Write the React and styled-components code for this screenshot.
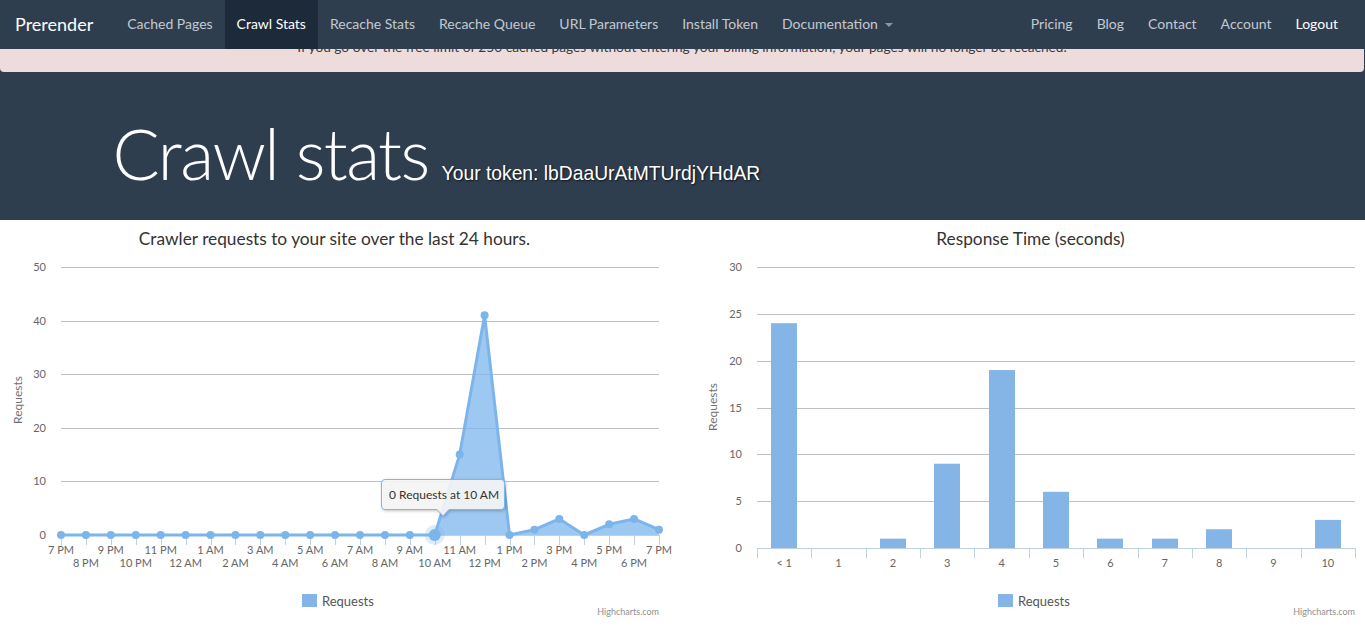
import React from 'react'
import styled, { createGlobalStyle } from 'styled-components'

// page chrome + two highcharts-like charts drawn in svg

const BLUE = '#7cb5ec'

const GlobalStyle = createGlobalStyle`
  body {
    margin: 0;
    background: #fff;
    font-family: Lato, "Helvetica Neue", Arial, sans-serif;
    color: #333;
  }
  * { box-sizing: border-box; }
`

const leftLinks = ['Cached Pages', 'Crawl Stats', 'Recache Stats', 'Recache Queue', 'URL Parameters', 'Install Token']
const rightLinks = ['Pricing', 'Blog', 'Contact', 'Account']

const AREA_DATA = [...Array(16).fill(0), 15, 41, 0, 1, 3, 0, 2, 3, 1]
const BAR_DATA = [24, 0, 1, 9, 19, 6, 1, 1, 2, 0, 3]
const BAR_CATS = ['< 1', '1', '2', '3', '4', '5', '6', '7', '8', '9', '10']

const hourLabel = i => {
  const h = (19 + i) % 24
  return `${h % 12 || 12} ${h < 12 ? 'AM' : 'PM'}`
}

const App = () => {
  return (
    <>
      <GlobalStyle />
      <Navbar>
        <Brand>Prerender</Brand>
        <NavGroup>
          {leftLinks.map(l => (
            <NavItem key={l} $active={l === 'Crawl Stats'}>{l}</NavItem>
          ))}
          <NavItem>Documentation<Caret /></NavItem>
        </NavGroup>
        <NavGroup $right>
          {rightLinks.map(l => <NavItem key={l}>{l}</NavItem>)}
          <NavItem $bright>Logout</NavItem>
        </NavGroup>
      </Navbar>

      <TopBand>
        <Alert>
          If you go over the free limit of 250 cached pages without entering your billing information, your pages will no longer be recached.
        </Alert>
        <Jumbotron>
          <Container>
            <Title>Crawl stats<Token>Your token: lbDaaUrAtMTUrdjYHdAR</Token></Title>
          </Container>
        </Jumbotron>
      </TopBand>

      <ChartsRow>
        <RequestsChart />
        <ResponseChart />
      </ChartsRow>
    </>
  )
}

export default App

const RequestsChart = () => {
  const left = 61
  const width = 598
  const bottom = 315
  const step = width / 24
  const unit = 5.36
  const px = i => left + i * step
  const py = v => bottom - v * unit
  const line = AREA_DATA.map((v, i) => `${px(i)},${py(v)}`).join(' L ')
  const hover = 15

  return (
    <ChartSvg width="669" height="400">
      <ChartTitle x="334.5" y="25" textAnchor="middle">Crawler requests to your site over the last 24 hours.</ChartTitle>
      {[10, 20, 30, 40, 50].map(v => (
        <GridLine key={v} x1={left} x2={left + width} y1={Math.round(py(v)) + 0.5} y2={Math.round(py(v)) + 0.5} />
      ))}
      {[0, 10, 20, 30, 40, 50].map(v => (
        <AxisLabel key={v} x="46" y={py(v) + 4} textAnchor="end">{v}</AxisLabel>
      ))}
      <AxisTitle transform="translate(22 180) rotate(-90)" textAnchor="middle">Requests</AxisTitle>

      <AxisLine x1={left} x2={left + width} y1={bottom + 0.5} y2={bottom + 0.5} />
      {AREA_DATA.map((_, i) => (
        <AxisLine key={i} x1={Math.round(px(i)) + 0.5} x2={Math.round(px(i)) + 0.5} y1={bottom} y2={bottom + 10} />
      ))}
      {AREA_DATA.map((_, i) => (
        <AxisLabel key={i} x={px(i)} y={i % 2 ? 347 : 334} textAnchor="middle">{hourLabel(i)}</AxisLabel>
      ))}

      <AreaFill d={`M ${line} L ${px(24)},${bottom} L ${px(0)},${bottom} Z`} />
      <SeriesLine d={`M ${line}`} />
      <circle cx={px(hover)} cy={bottom} r="10" fill={BLUE} fillOpacity="0.25" />
      {AREA_DATA.map((v, i) => (
        <circle key={i} cx={px(i)} cy={py(v)} r={i === hover ? 6 : 4} fill={BLUE} />
      ))}

      <TooltipShape d="M 385 259.5 L 501 259.5 Q 504.5 259.5 504.5 263 L 504.5 286 Q 504.5 289.5 501 289.5 L 449 289.5 L 443 296 L 437 289.5 L 385 289.5 Q 381.5 289.5 381.5 286 L 381.5 263 Q 381.5 259.5 385 259.5 Z" />
      <TooltipText x="389" y="279">0 Requests at 10 AM</TooltipText>

      <LegendBox x="302" y="374" width="15" height="13" />
      <LegendText x="322" y="386">Requests</LegendText>
      <Credits x="659" y="395" textAnchor="end">Highcharts.com</Credits>
    </ChartSvg>
  )
}

const ResponseChart = () => {
  const left = 61
  const width = 598
  const bottom = 328
  const unit = 281 / 30
  const cw = width / 11
  const py = v => bottom - v * unit

  return (
    <ChartSvg width="669" height="400">
      <ChartTitle x="334.5" y="25" textAnchor="middle">Response Time (seconds)</ChartTitle>
      {[5, 10, 15, 20, 25, 30].map(v => (
        <GridLine key={v} x1={left} x2={left + width} y1={Math.round(py(v)) + 0.5} y2={Math.round(py(v)) + 0.5} />
      ))}
      {[0, 5, 10, 15, 20, 25, 30].map(v => (
        <AxisLabel key={v} x="46" y={py(v) + 4} textAnchor="end">{v}</AxisLabel>
      ))}
      <AxisTitle transform="translate(21 187) rotate(-90)" textAnchor="middle">Requests</AxisTitle>

      {BAR_DATA.map((v, i) => (
        <Bar key={i} x={Math.round(left + i * cw + (cw - 26) / 2)} y={py(v)} width="26" height={v * unit} />
      ))}
      <AxisLine x1={left} x2={left + width} y1={bottom + 0.5} y2={bottom + 0.5} />
      {Array.from({ length: 12 }).map((_, i) => (
        <AxisLine key={i} x1={Math.round(left + i * cw) + 0.5} x2={Math.round(left + i * cw) + 0.5} y1={bottom} y2={bottom + 10} />
      ))}
      {BAR_CATS.map((c, i) => (
        <AxisLabel key={c} x={left + (i + 0.5) * cw} y="347" textAnchor="middle">{c}</AxisLabel>
      ))}

      <LegendBox x="302" y="374" width="15" height="13" />
      <LegendText x="322" y="386">Requests</LegendText>
      <Credits x="659" y="395" textAnchor="end">Highcharts.com</Credits>
    </ChartSvg>
  )
}

const Navbar = styled.nav`
  position: fixed;
  top: 0;
  left: 0;
  right: 0;
  z-index: 10;
  height: 49px;
  display: flex;
  align-items: stretch;
  padding: 0 15px;
  background: #2f3e4f;
`

const Brand = styled.a`
  display: flex;
  align-items: center;
  padding-bottom: 2px;
  margin-right: 22px;
  font-size: 18px;
  color: #fff;
`

const NavGroup = styled.ul`
  display: flex;
  margin: 0 0 0 ${p => (p.$right ? 'auto' : '0')};
  padding: 0;
  list-style: none;
`

const NavItem = styled.li`
  display: flex;
  align-items: center;
  padding: 0 12px 2px;
  font-size: 14px;
  color: ${p => (p.$active || p.$bright ? '#fff' : '#c3c9d0')};
  background: ${p => (p.$active ? '#1c2a3a' : 'transparent')};
`

const Caret = styled.span`
  display: inline-block;
  margin-left: 7px;
  margin-top: 2px;
  border-top: 4px solid #8d97a3;
  border-left: 4px solid transparent;
  border-right: 4px solid transparent;
`

const TopBand = styled.header`
  padding-top: 22px;
  background: #2f3e4f;
`

const Alert = styled.div`
  margin-right: 1px;
  padding: 15px;
  border-radius: 4px;
  background: #eedcdc;
  color: #3a3a3a;
  font-size: 13.7px;
  line-height: 20px;
  text-align: center;
`

const Jumbotron = styled.section`
  height: 148px;
  padding-top: 41px;
`

const Container = styled.div`
  width: 1170px;
  margin: 0 auto;
  padding: 0 15px;
`

const Title = styled.h1`
  margin: 0;
  font-size: 70px;
  font-weight: 300;
  letter-spacing: -1.6px;
  line-height: 80px;
  color: #fff;
`

const Token = styled.small`
  margin-left: 13px;
  font-family: "Liberation Sans", Arial, sans-serif;
  font-size: 19.3px;
  font-weight: 400;
  letter-spacing: 0;
  color: #fff;
  text-shadow: 1px 1px 2px rgba(0, 0, 0, 0.7);
`

const ChartsRow = styled.main`
  display: grid;
  grid-template-columns: 1fr 1fr;
  column-gap: 27px;
  background: #fff;
`

const ChartSvg = styled.svg`
  display: block;
  overflow: visible;
  font-family: Lato, sans-serif;
`

const ChartTitle = styled.text`
  font-size: 17.3px;
  fill: #333;
`

const GridLine = styled.line`
  stroke: #c0c0c0;
  stroke-width: 1;
`

const AxisLine = styled.line`
  stroke: #c0d0e0;
  stroke-width: 1;
`

const AxisLabel = styled.text`
  font-size: 11px;
  fill: #666;
`

const AxisTitle = styled.text`
  font-size: 12px;
  fill: #707070;
`

const AreaFill = styled.path`
  fill: ${BLUE};
  fill-opacity: 0.75;
`

const SeriesLine = styled.path`
  fill: none;
  stroke: ${BLUE};
  stroke-width: 3;
  stroke-linejoin: round;
`

const Bar = styled.rect`
  fill: #85b4e6;
`

const TooltipShape = styled.path`
  fill: rgba(249, 249, 249, 0.9);
  stroke: ${BLUE};
  stroke-width: 1;
  filter: drop-shadow(1px 1px 1.5px rgba(0, 0, 0, 0.25));
`

const TooltipText = styled.text`
  font-size: 12px;
  fill: #333;
`

const LegendBox = styled.rect`
  fill: #85b4e6;
`

const LegendText = styled.text`
  font-size: 13px;
  fill: #555;
`

const Credits = styled.text`
  font-size: 9px;
  fill: #909090;
`
